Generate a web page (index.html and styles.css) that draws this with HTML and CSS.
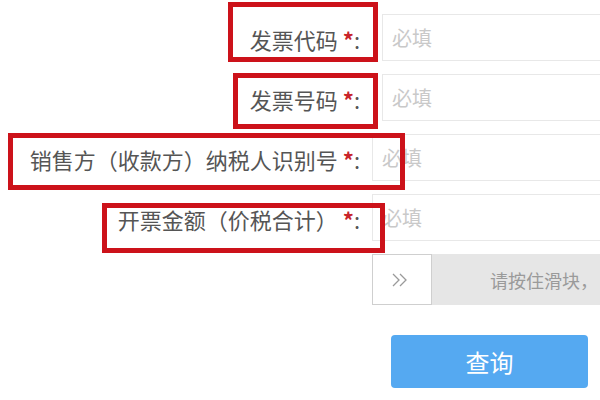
FILE: index.html
```html
<!DOCTYPE html>
<html lang="zh-CN">
<head>
<meta charset="utf-8">
<title>发票查验</title>
<link rel="stylesheet" href="styles.css">
</head>
<body>
<div class="page">
  <form class="form">
    <div class="row row-narrow">
      <label class="label">发票代码 <span class="star">*</span>:</label>
      <div class="input"><span class="ph">必填</span></div>
    </div>
    <div class="row row-narrow">
      <label class="label">发票号码 <span class="star">*</span>:</label>
      <div class="input"><span class="ph">必填</span></div>
    </div>
    <div class="row">
      <label class="label">销售方（收款方）纳税人识别号 <span class="star">*</span>:</label>
      <div class="input"><span class="ph">必填</span></div>
    </div>
    <div class="row">
      <label class="label">开票金额（价税合计）&nbsp;<span class="star">*</span>:</label>
      <div class="input"><span class="ph">必填</span></div>
    </div>
    <div class="row slider-row">
      <span></span>
      <div class="slider">
        <div class="handle">
          <svg width="20" height="16" viewBox="0 0 20 16"><path d="M3 2 L9 8 L3 14 M10 2 L16 8 L10 14" fill="none" stroke="#9a9a9a" stroke-width="1.3"/></svg>
        </div>
        <div class="track"><span class="hint">请按住滑块，</span></div>
      </div>
    </div>
    <div class="actions">
      <button type="button" class="btn">查询</button>
    </div>
  </form>
  <div class="mark mark-1"></div>
  <div class="mark mark-2"></div>
  <div class="mark mark-3"></div>
  <div class="mark mark-4"></div>
</div>
</body>
</html>
```
FILE: styles.css
```css
html, body {
  margin: 0;
  padding: 0;
  background: #fff;
}
body {
  width: 600px;
  height: 400px;
  overflow: hidden;
  font-family: "Noto Sans CJK SC", "Noto Sans", sans-serif;
}
.page {
  position: relative;
  width: 600px;
  height: 400px;
}
.form {
  display: flex;
  flex-direction: column;
  gap: 13px;
  padding-top: 14px;
}
.row {
  display: grid;
  grid-template-columns: 372px 1fr;
  align-items: center;
  height: 47px;
}
.row-narrow {
  grid-template-columns: 382px 1fr;
}
.label {
  text-align: right;
  padding-right: 12px;
  font-size: 22px;
  color: #555;
  white-space: nowrap;
  position: relative;
  top: 1px;
}
.row-narrow .label {
  padding-right: 22px;
}
.star {
  color: #c8242a;
  font-weight: bold;
}
.input {
  height: 47px;
  border: 1px solid #e8e8e8;
  border-right: none;
  background: #fff;
  display: flex;
  align-items: center;
  padding-left: 9px;
  box-sizing: border-box;
}
.ph {
  font-size: 20px;
  color: #c9c9c9;
}
.slider-row {
  height: 51px;
}
.slider {
  display: flex;
  height: 51px;
}
.handle {
  width: 60px;
  box-sizing: border-box;
  border: 1px solid #cfcfcf;
  background: #fff;
  display: flex;
  align-items: center;
  justify-content: center;
  padding-right: 4px;
}
.track {
  flex: 1;
  background: #e6e6e6;
  display: flex;
  align-items: center;
  padding-left: 58px;
}
.hint {
  font-size: 18px;
  color: #9a9a9a;
  white-space: nowrap;
}
.actions {
  padding-left: 391px;
  margin-top: 17px;
}
.btn {
  width: 197px;
  height: 53px;
  border: none;
  border-radius: 4px;
  background: #55a9f1;
  color: #fff;
  font-family: "Noto Sans CJK SC", sans-serif;
  font-size: 24px;
  padding: 0;
}
.mark {
  position: absolute;
  border: 5px solid #cc121a;
  box-sizing: border-box;
}
.mark-1 { left: 228px; top: 2px; width: 150px; height: 60px; }
.mark-2 { left: 233px; top: 73px; width: 145px; height: 56px; }
.mark-3 { left: 8px; top: 133px; width: 397px; height: 57px; }
.mark-4 { left: 102px; top: 203px; width: 283px; height: 50px; }
```
